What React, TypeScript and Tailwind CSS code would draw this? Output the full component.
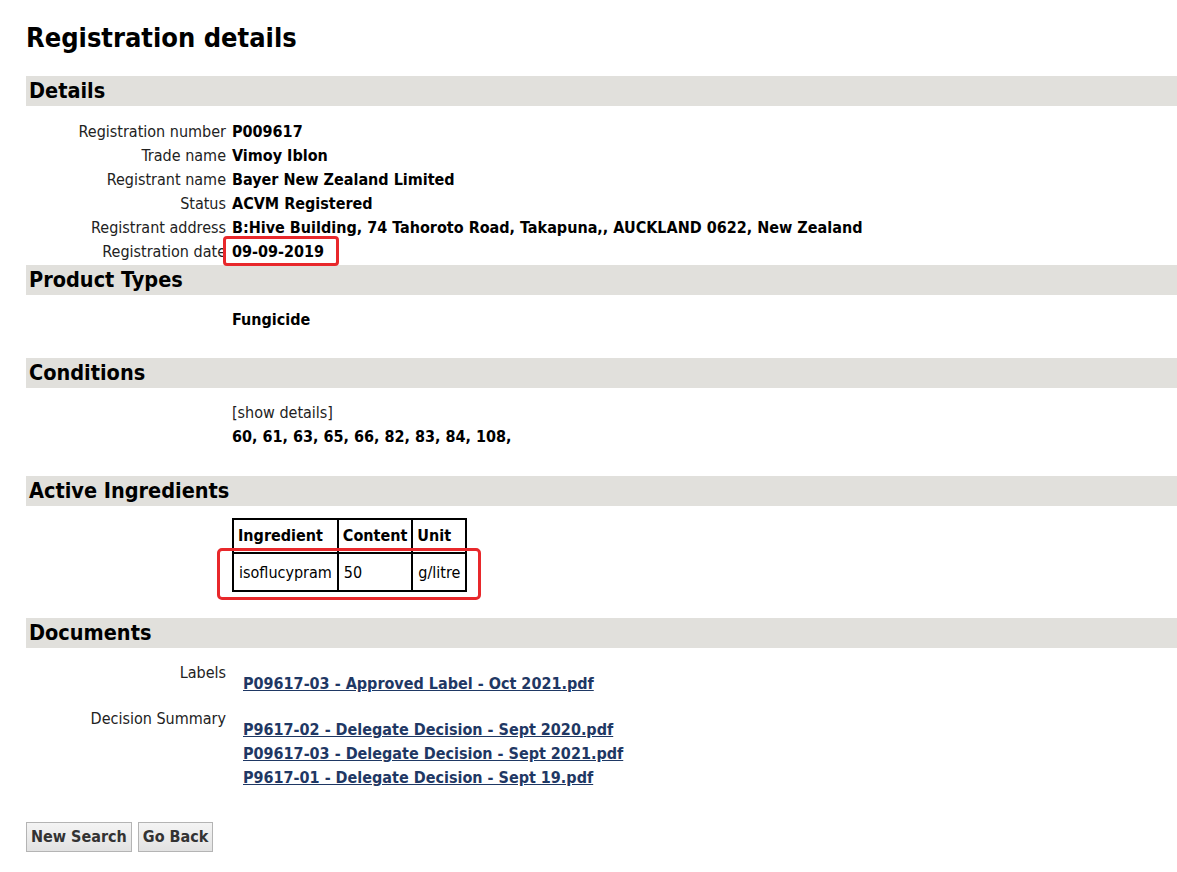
import React from "react";

const font = { fontFamily: "'DejaVu Sans Condensed', 'Liberation Sans', Arial, sans-serif" };

const details: [string, string][] = [
  ["Registration number", "P009617"],
  ["Trade name", "Vimoy Iblon"],
  ["Registrant name", "Bayer New Zealand Limited"],
  ["Status", "ACVM Registered"],
  ["Registrant address", "B:Hive Building, 74 Tahoroto Road, Takapuna,, AUCKLAND 0622, New Zealand"],
  ["Registration date", "09-09-2019"],
];

const docs: { label: string; files: string[] }[] = [
  { label: "Labels", files: ["P09617-03 - Approved Label - Oct 2021.pdf"] },
  {
    label: "Decision Summary",
    files: [
      "P9617-02 - Delegate Decision - Sept 2020.pdf",
      "P09617-03 - Delegate Decision - Sept 2021.pdf",
      "P9617-01 - Delegate Decision - Sept 19.pdf",
    ],
  },
];

function SectionBar({ title }: { title: string }) {
  return (
    <div className="h-[30px] bg-[#e1e0dc] pl-[3px] flex items-center">
      <h2 className="text-[21.5px] font-bold leading-none text-black">{title}</h2>
    </div>
  );
}

function Row({ label, children }: { label?: string; children: React.ReactNode }) {
  return (
    <div className="grid grid-cols-[200px_1fr] gap-x-[6px] leading-[24px]">
      <div className="text-right text-[#222]">{label}</div>
      <div>{children}</div>
    </div>
  );
}

export default function App() {
  return (
    <div className="relative min-h-[872px] bg-white text-[16px] text-black" style={font}>
      <div className="pl-[26px]">
        <h1 className="pt-[20px] h-[76px] text-[27px] font-bold leading-[36px]">Registration details</h1>

        <SectionBar title="Details" />
        <div className="pt-[14px] pb-[1px]">
          {details.map(([k, v]) => (
            <Row key={k} label={k}>
              <span className="font-bold">{v}</span>
            </Row>
          ))}
        </div>

        <SectionBar title="Product Types" />
        <div className="pt-[13px] pb-[26px]">
          <Row>
            <span className="font-bold">Fungicide</span>
          </Row>
        </div>

        <SectionBar title="Conditions" />
        <div className="pt-[13px] pb-[27px]">
          <Row>
            <span className="text-[#222]">[show details]</span>
          </Row>
          <Row>
            <span className="font-bold">60, 61, 63, 65, 66, 82, 83, 84, 108,</span>
          </Row>
        </div>

        <SectionBar title="Active Ingredients" />
        <div className="pt-[12px] pb-[26px]">
          <div className="grid grid-cols-[200px_1fr] gap-x-[6px]">
            <div />
            <table className="border-collapse border-2 border-black w-[234px]">
              <thead>
                <tr className="h-[34px]">
                  <th className="border-2 border-black px-[4px] text-left font-bold">Ingredient</th>
                  <th className="border-2 border-black px-[4px] text-left font-bold">Content</th>
                  <th className="border-2 border-black px-[4px] text-left font-bold">Unit</th>
                </tr>
              </thead>
              <tbody>
                <tr className="h-[38px]">
                  <td className="border-2 border-black px-[5px] pt-[2px]">isoflucypram</td>
                  <td className="border-2 border-black px-[5px] pt-[2px]">50</td>
                  <td className="border-2 border-black px-[5px] pt-[2px]">g/litre</td>
                </tr>
              </tbody>
            </table>
          </div>
        </div>

        <SectionBar title="Documents" />
        <div className="pt-[13px] flex flex-col gap-[11px]">
          {docs.map((d) => (
            <Row key={d.label} label={d.label}>
              <div className="pt-[11px] pl-[11px] flex flex-col">
                {d.files.map((f) => (
                  <a key={f} href="#" className="font-bold text-[#1f3864] underline w-fit">
                    {f}
                  </a>
                ))}
              </div>
            </Row>
          ))}
        </div>

        <div className="pt-[32px] flex gap-[6px]">
          <button className="h-[30px] px-[4px] border border-[#b4b4b4] bg-gradient-to-b from-[#f4f4f4] to-[#e2e2e2] font-bold text-[#333] leading-none">
            New Search
          </button>
          <button className="h-[30px] px-[4px] border border-[#b4b4b4] bg-gradient-to-b from-[#f4f4f4] to-[#e2e2e2] font-bold text-[#333] leading-none">
            Go Back
          </button>
        </div>
      </div>

      {/* annotation boxes */}
      <div className="absolute left-[223px] top-[236px] w-[116px] h-[30px] border-[3px] border-[#e8282b] rounded-[4px] pointer-events-none" />
      <div className="absolute left-[217px] top-[548px] w-[264px] h-[52px] border-[3px] border-[#e8282b] rounded-[5px] pointer-events-none" />
    </div>
  );
}
